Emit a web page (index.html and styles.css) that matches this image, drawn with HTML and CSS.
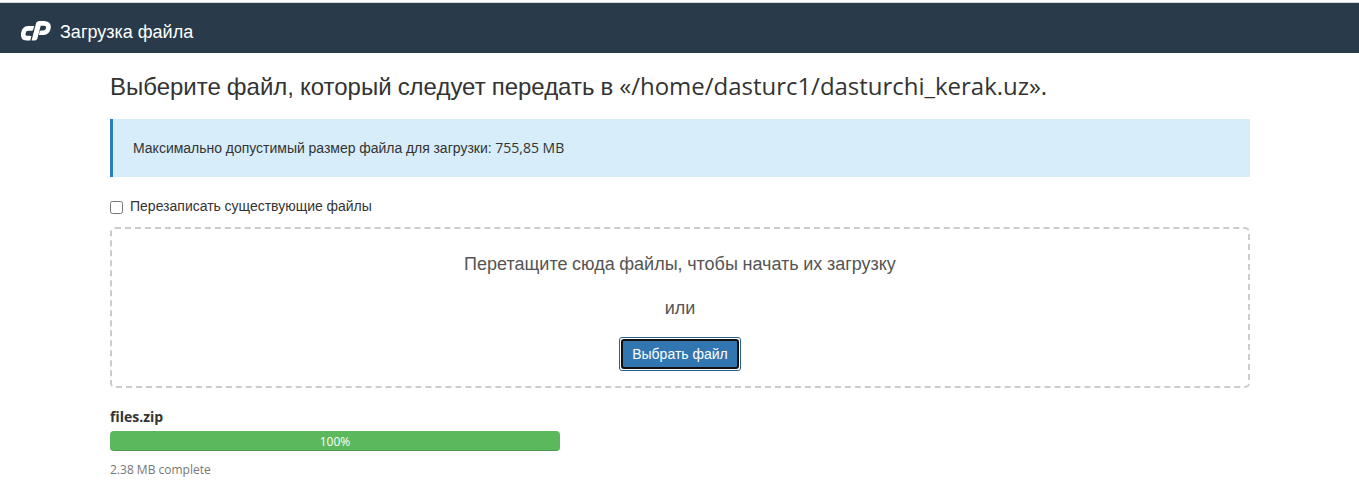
FILE: index.html
```html
<!DOCTYPE html>
<html lang="ru">
<head>
<meta charset="utf-8">
<title>Загрузка файла</title>
<link rel="stylesheet" href="styles.css">
</head>
<body>
<header class="masthead">
  <svg class="logo" width="32" height="22" viewBox="0 0 32 22" aria-hidden="true">
    <g fill="#fff">
      <path d="M7.8 6H14.2L13.2 9.6Q12.8 10.8 11.5 10.8H8.2Q6.1 10.8 5.6 13.2Q5.1 15.8 7.2 15.8H9.2L11.4 16.3L10.2 20.5H6.4Q.1 20.2 1 13.2Q2.2 6.3 7.8 6Z"/>
      <path d="M11.6 20.5L15.9 3.8Q16.7 1 19.4 1H24.6Q31.5 1.5 30.8 8Q29.5 14.7 23.6 15H18.8L19.7 11.6Q20.1 10.4 21.3 10.4H23.4Q25.5 10.2 26.1 7.9Q26.3 5.8 24.3 5.7H20.7L17.4 18.5Q16.8 20.5 14.8 20.5Z"/>
    </g>
  </svg>
  <span class="masthead-title">Загрузка файла</span>
</header>
<main class="container">
  <h1 class="heading"><span class="cyr">Выберите файл, который следует передать в </span>«/home/dasturc1/dasturchi_kerak.uz».</h1>
  <div class="alert"><span class="cyr">Максимально допустимый размер файла для загрузки: </span>755,85 MB</div>
  <label class="overwrite"><input class="checkbox" type="checkbox"><span class="cyr">Перезаписать существующие файлы</span></label>
  <section class="dropzone">
    <p class="drop-text">Перетащите сюда файлы, чтобы начать их загрузку</p>
    <p class="drop-text">или</p>
    <button class="choose" type="button"><span class="choose-label">Выбрать файл</span></button>
  </section>
  <section class="upload">
    <div class="file-name">files.zip</div>
    <div class="progress">100%</div>
    <div class="status">2.38 MB complete</div>
  </section>
</main>
</body>
</html>
```

FILE: styles.css
```css
* { box-sizing: border-box; }
body {
  margin: 0;
  padding-top: 2px;
  background: #fff;
  color: #333;
  font: 14px/20px "Open Sans", "Liberation Sans", sans-serif;
  height: 485px;
  overflow: hidden;
}
.cyr { font-family: "Liberation Sans", sans-serif; word-spacing: -0.018em; }
.masthead {
  display: flex;
  align-items: center;
  height: 51px;
  padding: 6px 0 0 20px;
  border-top: 1px solid #d5d8d8;
  background: #293a4a;
  color: #fff;
}
.logo { display: block; margin-right: 8px; }
.masthead-title { padding-top: 2px; font: 18px/24px "Liberation Sans", sans-serif; }
.container { width: 1140px; margin: 0 0 0 110px; }
.heading {
  margin: 0;
  padding-top: 16px;
  height: 66px;
  font-size: 24px;
  line-height: 33px;
  font-weight: 400;
  letter-spacing: -0.02px;
  white-space: nowrap;
}
.heading .cyr { word-spacing: -0.55px; }
.alert {
  height: 58px;
  padding: 19px 20px;
  border-left: 3px solid #2980b9;
  background: #d7edf9;
}
.overwrite {
  display: flex;
  align-items: center;
  height: 20px;
  margin-top: 19px;
}
.checkbox { width: 13px; height: 13px; margin: 3px 7px 0 0; }
.dropzone {
  display: flex;
  flex-direction: column;
  align-items: center;
  height: 161px;
  margin-top: 11px;
  padding-top: 22px;
  border: 2px dashed #ccc;
  border-radius: 5px;
}
.drop-text {
  margin: 0 0 18px;
  color: #555;
  font: 18px/26px "Liberation Sans", sans-serif;
  word-spacing: -0.4px;
}
.choose {
  display: flex;
  width: 122px;
  height: 34px;
  margin-top: -2px;
  padding: 1px;
  border: 1px solid #285e8e;
  border-radius: 3px;
  background: #fff;
  color: #fff;
  font: 14px/26px "Liberation Sans", sans-serif;
}
.choose-label {
  flex: 1;
  border: 2px solid #101010;
  border-radius: 3px;
  background: #3276b1;
}
.upload { width: 450px; padding-top: 19px; }
.file-name { font-weight: 700; }
.progress {
  height: 20px;
  margin-top: 4px;
  border-radius: 4px;
  background: #5cb85c;
  box-shadow: inset 0 -1px 0 rgba(0, 0, 0, .15);
  color: #fff;
  font-size: 12px;
  line-height: 21px;
  text-align: center;
}
.status { margin-top: 9px; color: #777; font-size: 12px; }
```
